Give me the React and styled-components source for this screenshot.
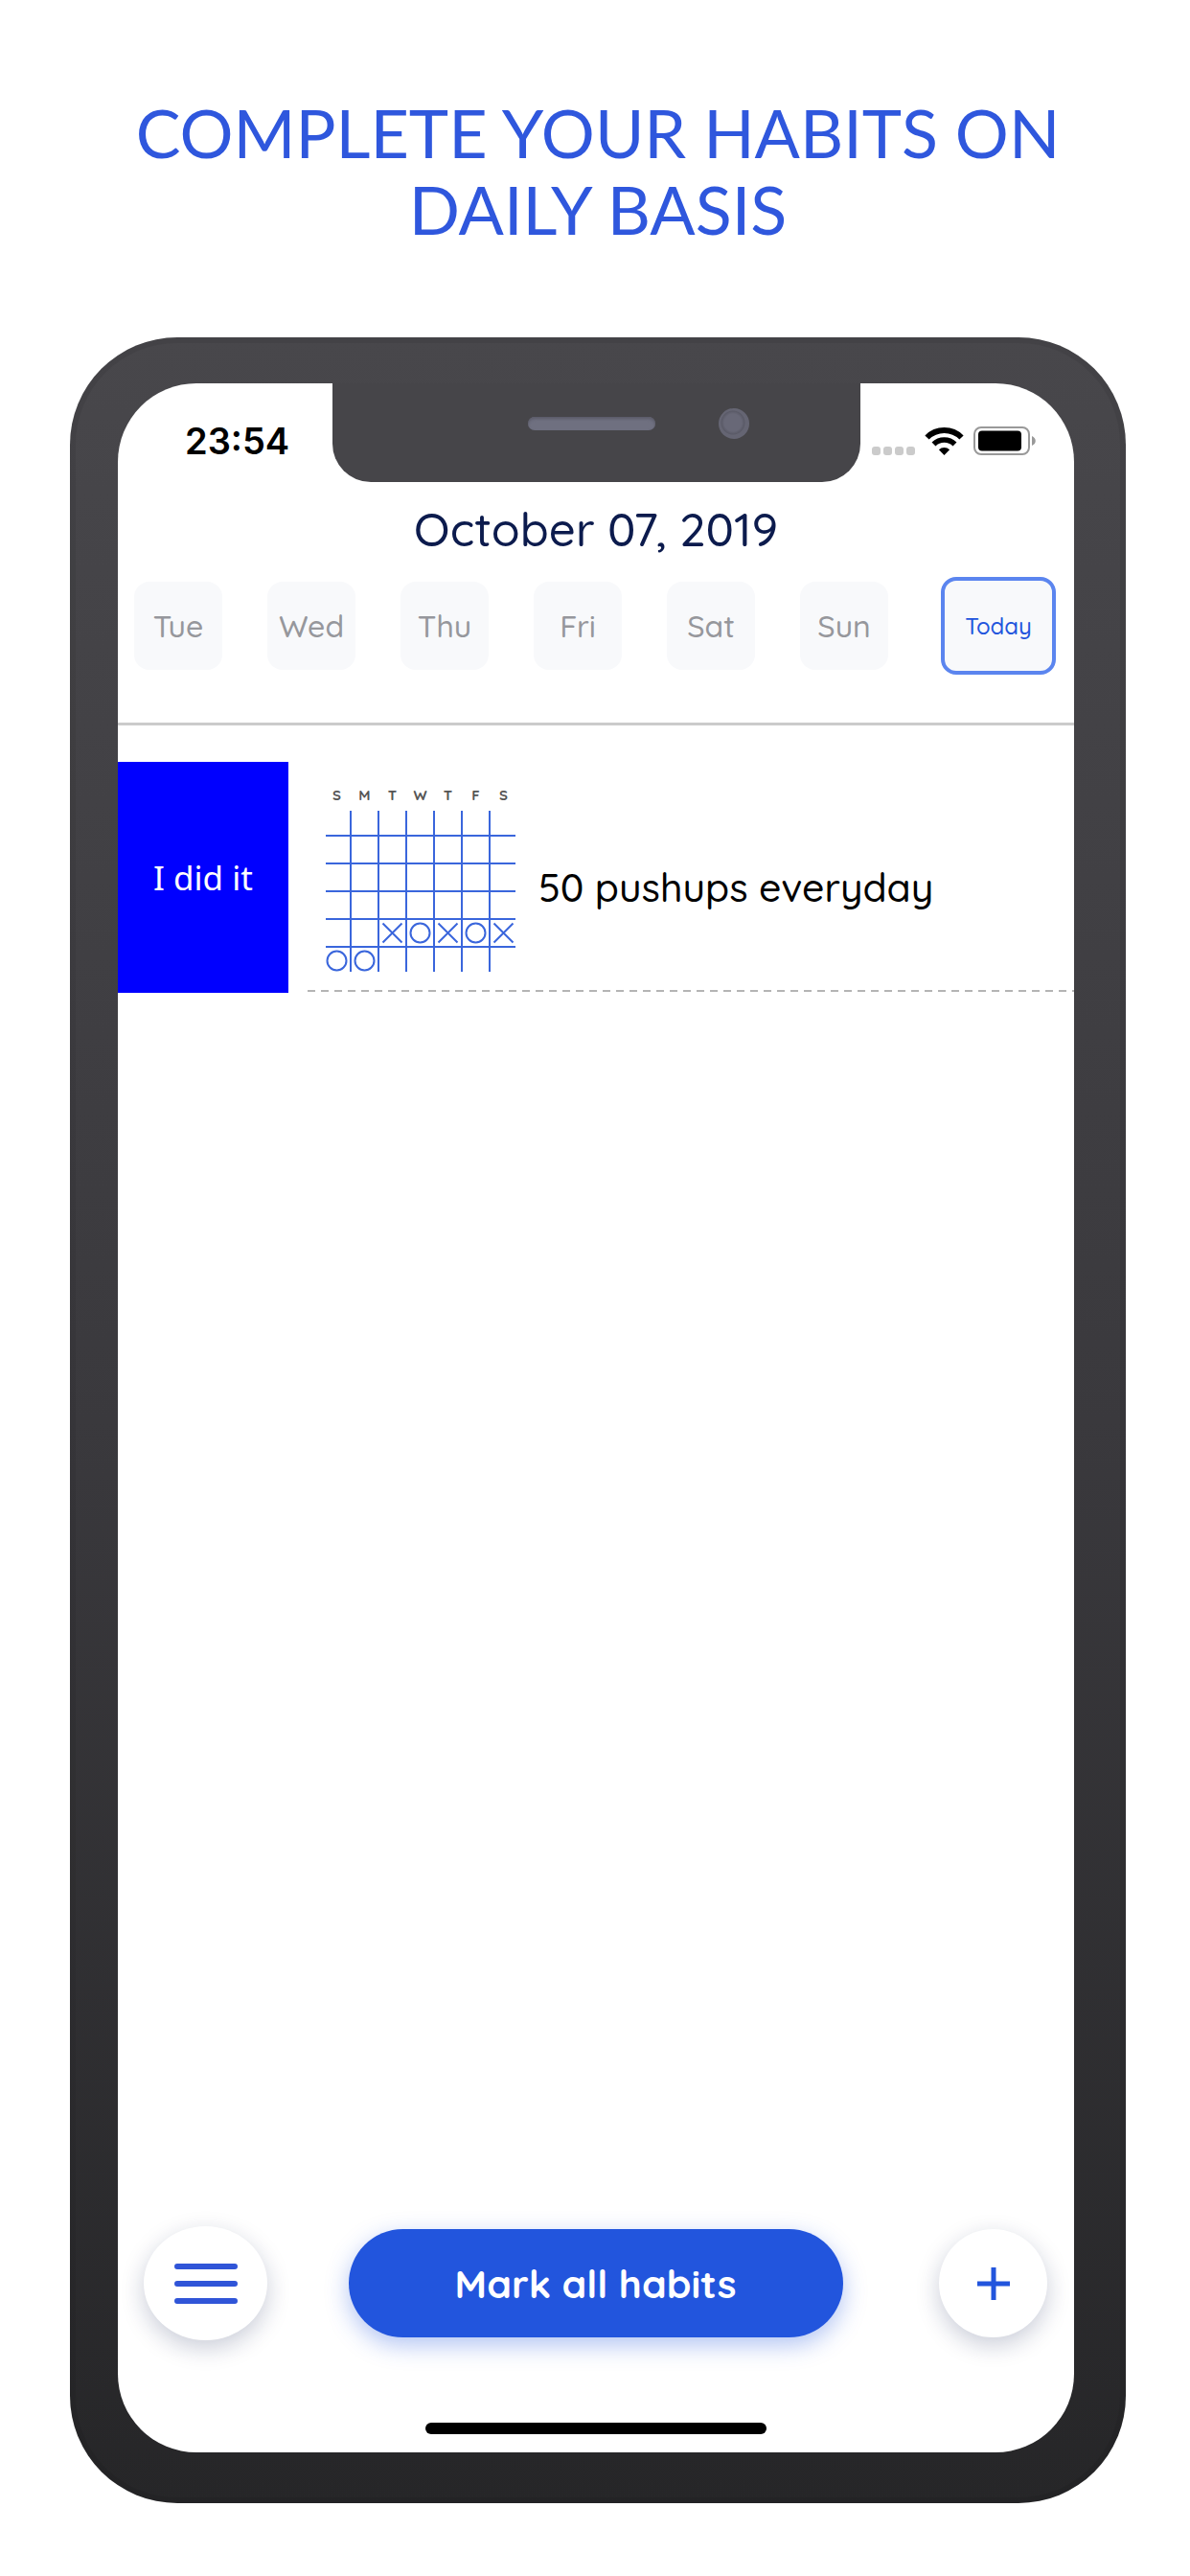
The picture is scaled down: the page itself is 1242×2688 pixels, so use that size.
import React from "react";
import styled, { createGlobalStyle } from "styled-components";

const rounded = `Quicksand, Lato, "Liberation Sans", sans-serif`;

const GlobalStyle = createGlobalStyle`
  * { box-sizing: border-box; }
  body { margin: 0; background: #fff; }
`;

const Page = styled.main`
  min-height: 100vh;
  display: flex;
  flex-direction: column;
  gap: 88px;
  padding: 98px 67px 76px 73px;
  font-family: ${rounded};
`;

const Headline = styled.h1`
  margin: 0;
  padding-bottom: 6px;
  color: #2f57dd;
  font-family: Herculanum, Lato, sans-serif;
  font-size: 70px;
  font-weight: 400;
  line-height: 80px;
  text-align: center;
  text-transform: uppercase;
`;

const Phone = styled.div`
  flex: 1;
  display: flex;
  padding: 48px 54px 53px 50px;
  border-radius: 112px;
  background: linear-gradient(#48474b, #3a393d 50%, #262628);
  box-shadow: inset 0 0 0 6px rgba(0, 0, 0, 0.06);
`;

const Screen = styled.div`
  flex: 1;
  min-width: 0;
  display: flex;
  flex-direction: column;
  overflow: hidden;
  border-radius: 82px;
  background: #fff;
`;

const StatusBar = styled.div`
  display: grid;
  grid-template: 103px / 224px 1fr 223px;
`;

const Clock = styled.time`
  padding: 40px 0 0 70px;
  color: #000;
  font-family: Inter, sans-serif;
  font-size: 38px;
  font-weight: 600;
  line-height: 40px;
`;

const Notch = styled.div`
  display: flex;
  justify-content: center;
  align-items: center;
  gap: 66px;
  padding: 0 0 20px 87px;
  border-radius: 0 0 40px 40px;
  background: #464549;
`;

const Speaker = styled.span`
  width: 133px;
  height: 14px;
  border-radius: 7px;
  background: #6f7080;
  box-shadow: inset 0 2px 3px #5b5b68;
`;

const Camera = styled.span`
  width: 32px;
  height: 32px;
  border-radius: 50%;
  background: radial-gradient(circle at 15px 15px, #686877 9px, #5a5a67 12px, #656573 13px);
`;

const Indicators = styled.div`
  display: flex;
  align-items: center;
  justify-content: flex-end;
  gap: 10px;
  padding: 17px 40px 0 0;
`;

const DateTitle = styled.h2`
  margin: 0;
  padding: 19px 0 20px;
  color: #0c1b4d;
  font-size: 49px;
  font-weight: 500;
  line-height: 60px;
  text-align: center;
`;

const Week = styled.nav`
  display: grid;
  grid-template-columns: repeat(6, 1fr) 128px;
  align-items: center;
  padding: 0 19px 50px 17px;
  border-bottom: 3px solid #cbcbcb;
`;

const Day = styled.button`
  justify-self: ${(p) => (p.$today ? "end" : "start")};
  width: ${(p) => (p.$today ? 120 : 92)}px;
  height: ${(p) => (p.$today ? 102 : 92)}px;
  padding: 0;
  border: ${(p) => (p.$today ? "4px solid #5b85ef" : "0")};
  border-radius: 16px;
  background: #f8f9fb;
  color: ${(p) => (p.$today ? "#2255dd" : "#96979c")};
  font-family: inherit;
  font-size: ${(p) => (p.$today ? 24 : 32)}px;
  font-weight: 500;
`;

const Habits = styled.ul`
  flex: 1;
  margin: 0;
  padding: 38px 0;
  list-style: none;
`;

const Habit = styled.li`
  display: flex;
  gap: 20px;
  height: 241px;
`;

const DoneButton = styled.button`
  width: 178px;
  padding: 0;
  border: 0;
  background: #0000ff;
  color: #fff;
  font-family: "Noto Sans", sans-serif;
  font-size: 35px;
`;

const HabitBody = styled.div`
  flex: 1;
  display: flex;
  align-items: flex-start;
  gap: 22px;
  margin-bottom: 1px;
  padding: 25px 0 0 16px;
  background: repeating-linear-gradient(90deg, #b4b4b4 0 8px, transparent 8px 14px) bottom / 100% 2px no-repeat;
`;

const Calendar = styled.div`
  width: 203px;
`;

const Initials = styled.div`
  display: grid;
  grid-template-columns: repeat(7, 1fr);
  padding-bottom: 6px;
  color: #555;
  font-size: 15px;
  font-weight: 700;
  line-height: 20px;
  text-align: center;
`;

const Grid = styled.svg`
  display: block;
  fill: none;
  stroke: #3a66dc;
  stroke-width: 2;
`;

const HabitName = styled.h3`
  margin: 0;
  padding-top: 82px;
  color: #000;
  font-size: 41px;
  font-weight: 500;
  line-height: 48px;
`;

const Actions = styled.div`
  display: grid;
  grid-template-columns: 1fr auto 1fr;
  align-items: center;
  padding: 0 28px 0 27px;

  & > :last-child {
    justify-self: end;
  }
`;

const RoundButton = styled.button`
  display: grid;
  place-items: center;
  width: ${(p) => p.$width}px;
  height: ${(p) => p.$height}px;
  padding: 0;
  border: 0;
  border-radius: 50%;
  background: #fff;
  color: #2255dd;
  box-shadow: 0 8px 24px rgba(12, 27, 77, 0.22);
`;

const MarkAll = styled.button`
  width: 516px;
  height: 113px;
  border: 0;
  border-radius: 57px;
  background: #2255dd;
  color: #fff;
  box-shadow: 0 8px 24px rgba(34, 85, 221, 0.35);
  font-family: inherit;
  font-size: 41px;
  font-weight: 700;
`;

const HomeBar = styled.div`
  width: 356px;
  height: 12px;
  margin: 86px auto 19px;
  border-radius: 6px;
  background: #000;
`;

const days = ["Tue", "Wed", "Thu", "Fri", "Sat", "Sun", "Today"];
const initials = ["S", "M", "T", "W", "T", "F", "S"];
const marks = [
  { col: 2, row: 4, done: false },
  { col: 3, row: 4, done: true },
  { col: 4, row: 4, done: false },
  { col: 5, row: 4, done: true },
  { col: 6, row: 4, done: false },
  { col: 0, row: 5, done: true },
  { col: 1, row: 5, done: true },
];

function HabitCalendar() {
  return (
    <Calendar>
      <Initials>
        {initials.map((letter, i) => (
          <span key={i}>{letter}</span>
        ))}
      </Initials>
      <Grid width="203" height="168" viewBox="0 0 203 168" role="img" aria-label="Habit history">
        {[1, 2, 3, 4, 5, 6].map((n) => (
          <path key={n} d={`M${n * 29} 0V168`} />
        ))}
        {[1, 2, 3, 4, 5].map((n) => (
          <path key={n} d={`M3 ${n * 29 - 3}H201`} />
        ))}
        {marks.map(({ col, row, done }) => {
          const x = col * 29 + 14.5;
          const y = row * 29 + 11.5;
          return done ? (
            <circle key={`${col}-${row}`} cx={x} cy={y} r="10" />
          ) : (
            <path key={`${col}-${row}`} d={`M${x - 10} ${y - 10}l20 20m0 -20l-20 20`} />
          );
        })}
      </Grid>
    </Calendar>
  );
}

export default function App() {
  return (
    <>
      <GlobalStyle />
      <Page>
        <Headline>
          Complete your habits on
          <br />
          daily basis
        </Headline>
        <Phone>
          <Screen>
            <StatusBar>
              <Clock>23:54</Clock>
              <Notch>
                <Speaker />
                <Camera />
              </Notch>
              <Indicators>
                <svg width="45" height="29" viewBox="0 0 45 29" fill="#cbcbcb">
                  {[0, 12, 24, 36].map((x) => (
                    <rect key={x} x={x} y="20" width="9" height="9" rx="3" />
                  ))}
                </svg>
                <svg width="41" height="29" viewBox="0 0 41 29">
                  <path d="M2.5 10.5a25.5 25.5 0 0 1 36 0" fill="none" stroke="#000" strokeWidth="6" />
                  <path d="M9.5 17.5a15.6 15.6 0 0 1 22 0" fill="none" stroke="#000" strokeWidth="5.6" />
                  <path d="M20.5 29l-5.6 -5.8a8 8 0 0 1 11.2 0z" />
                </svg>
                <svg width="65" height="30" viewBox="0 0 65 30">
                  <rect x="1" y="1" width="57" height="28" rx="7" fill="none" stroke="#999" strokeWidth="2" />
                  <rect x="5" y="4.5" width="45" height="21" rx="4" />
                  <path d="M61 10c5 2 5 8 0 10z" fill="#999" />
                </svg>
              </Indicators>
            </StatusBar>
            <DateTitle>October 07, 2019</DateTitle>
            <Week aria-label="Week">
              {days.map((day) => (
                <Day key={day} type="button" $today={day === "Today"}>
                  {day}
                </Day>
              ))}
            </Week>
            <Habits>
              <Habit>
                <DoneButton type="button">I did it</DoneButton>
                <HabitBody>
                  <HabitCalendar />
                  <HabitName>50 pushups everyday</HabitName>
                </HabitBody>
              </Habit>
            </Habits>
            <Actions>
              <RoundButton type="button" aria-label="Menu" $width={129} $height={119}>
                <svg width="66" height="42" viewBox="0 0 66 42" stroke="#3055d8" strokeWidth="6" strokeLinecap="round">
                  <path d="M3 3H63M3 21H63M3 39H63" />
                </svg>
              </RoundButton>
              <MarkAll type="button">Mark all habits</MarkAll>
              <RoundButton type="button" aria-label="Add habit" $width={113} $height={113}>
                <svg width="34" height="34" viewBox="0 0 34 34" stroke="currentColor" strokeWidth="5">
                  <path d="M17 0V34M0 17H34" />
                </svg>
              </RoundButton>
            </Actions>
            <HomeBar />
          </Screen>
        </Phone>
      </Page>
    </>
  );
}
